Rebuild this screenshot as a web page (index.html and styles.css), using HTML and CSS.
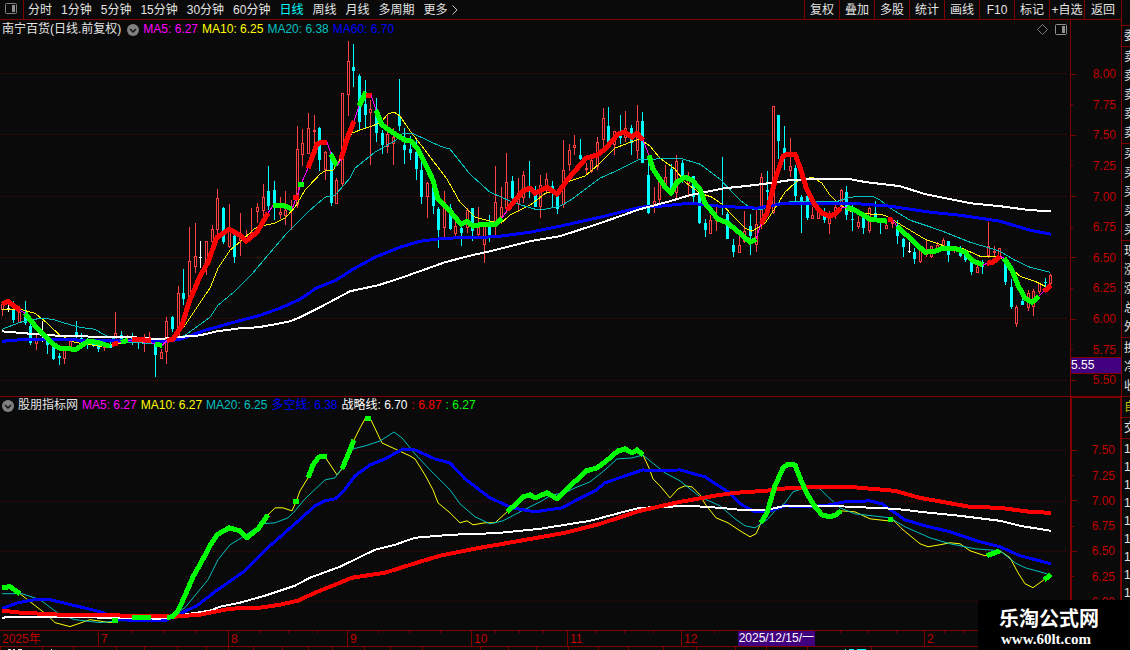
FILE: index.html
```
<!DOCTYPE html>
<html lang="zh-CN">
<head>
  <meta charset="UTF-8" />
  <title>南宁百货 日线</title>
  <link rel="stylesheet" href="styles.css">
</head>
<body>
  <div class="terminal">
    <div class="main">
      <header class="topbar">
        <button class="layout-btn" aria-label="布局">
          <svg width="12" height="11" viewBox="0 0 12 11"><rect x="0.5" y="0.5" width="11" height="10" rx="1" fill="none" stroke="#808080"/><rect x="7" y="2" width="3" height="7" fill="#909090"/></svg>
        </button>
        <nav class="periods">
          <button>分时</button>
          <button>1分钟</button>
          <button>5分钟</button>
          <button>15分钟</button>
          <button>30分钟</button>
          <button>60分钟</button>
          <button class="active">日线</button>
          <button>周线</button>
          <button>月线</button>
          <button>多周期</button>
          <button class="more">更多<svg width="6" height="10" viewBox="0 0 6 10"><path d="M0.5 0.5L5 5L0.5 9.5" fill="none" stroke="#c0c0c0"/></svg></button>
        </nav>
        <div class="tools">
          <button>复权</button>
          <button>叠加</button>
          <button>多股</button>
          <button>统计</button>
          <button>画线</button>
          <button>F10</button>
          <button>标记</button>
          <button>+自选</button>
          <button>返回</button>
        </div>
      </header>

      <section class="panel price-panel">
        <div class="plot">
          <div class="legend">
            <span class="name">南宁百货(日线.前复权)</span>
            <svg class="toggle" width="12" height="12" viewBox="0 0 12 12"><circle cx="6" cy="6" r="6" fill="#808080"/><path d="M3 5L6 8L9 5" fill="none" stroke="#111" stroke-width="1.5"/></svg>
            <span class="magenta">MA5: 6.27</span>
            <span class="yellow">MA10: 6.25</span>
            <span class="teal">MA20: 6.38</span>
            <span class="blue">MA60: 6.70</span>
            <span class="corner">
              <svg width="11" height="11" viewBox="0 0 11 11"><path d="M5.5 0.5L10.5 5.5L5.5 10.5L0.5 5.5Z" fill="none" stroke="#777"/></svg>
              <svg width="12" height="11" viewBox="0 0 12 11"><rect x="0.5" y="0.5" width="11" height="10" rx="1" fill="none" stroke="#909090"/><rect x="7" y="2" width="3" height="7" fill="#909090"/></svg>
            </span>
          </div>
          <svg class="chart" id="priceChart" viewBox="0 40 1070 356" preserveAspectRatio="none"></svg>
        </div>
        <div class="axis">
          <span>8.00</span>
          <span>7.75</span>
          <span>7.50</span>
          <span>7.25</span>
          <span>7.00</span>
          <span>6.75</span>
          <span>6.50</span>
          <span>6.25</span>
          <span>6.00</span>
          <span>5.75</span>
          <span>5.50</span>
          <b class="cursor-price">5.55</b>
        </div>
      </section>

      <section class="panel index-panel">
        <div class="plot">
          <div class="legend">
            <svg class="toggle" width="12" height="12" viewBox="0 0 12 12"><circle cx="6" cy="6" r="6" fill="#808080"/><path d="M3 5L6 8L9 5" fill="none" stroke="#111" stroke-width="1.5"/></svg>
            <span class="name">股朋指标网</span>
            <span class="magenta">MA5: 6.27</span>
            <span class="yellow">MA10: 6.27</span>
            <span class="teal">MA20: 6.25</span>
            <span class="blue">多空线: 6.38</span>
            <span class="white">战略线: 6.70</span>
            <span class="red">: 6.87</span>
            <span class="green">: 6.27</span>
          </div>
          <svg class="chart" id="indexChart" viewBox="0 415 1070 215" preserveAspectRatio="none"></svg>
        </div>
        <div class="axis">
          <span>7.50</span>
          <span>7.25</span>
          <span>7.00</span>
          <span>6.75</span>
          <span>6.50</span>
          <span>6.25</span>
          <span>6.00</span>
        </div>
      </section>

      <div class="dates" id="dates">
        <svg class="ticks" id="dateTicks" viewBox="0 0 1121 2" preserveAspectRatio="none"></svg>
      </div>
      <svg class="strip" id="strip" viewBox="0 0 1121 3" preserveAspectRatio="none"></svg>
    </div>

    <aside class="quotes">
      <div class="group head"></div>
      <div class="group"><p>委</p></div>
      <div class="group"><p>卖</p><p>卖</p><p>卖</p><p>卖</p><p>卖</p></div>
      <div class="group"><p>买</p><p>买</p><p>买</p><p>买</p><p>买</p></div>
      <div class="group"><p>现</p><p>涨</p><p>涨</p><p>总</p><p>外</p></div>
      <div class="group"><p>换</p><p>净</p><p>收</p></div>
      <div class="group yellow"><p>自</p></div>
      <div class="group"><p>交</p></div>
      <div class="group trades"><p>1</p><p>1</p><p>1</p><p>1</p><p>1</p><p>1</p><p>1</p><p>1</p><p>1</p></div>
    </aside>

    <div class="watermark">
      <strong>乐淘公式网</strong>
      <span>www.60lt.com</span>
    </div>
  </div>

  <script src="chart.js"></script>
</body>
</html>
```
FILE: styles.css
```
* {
  box-sizing: border-box;
}
body {
  margin: 0;
  background: #0a0a0a;
  color: #e4e4e4;
  font-family: "Liberation Sans", "Noto Sans CJK SC", sans-serif;
  font-size: 12px;
  line-height: 16px;
}
button {
  padding: 0;
  border: none;
  background: none;
  color: inherit;
  font: inherit;
  white-space: nowrap;
  cursor: pointer;
}
svg {
  display: block;
  flex: none;
}
.terminal {
  position: relative;
  display: flex;
  height: 100vh;
  min-height: 400px;
  overflow: hidden;
}
.main {
  flex: 1;
  min-width: 0;
  display: flex;
  flex-direction: column;
}

/* top menu */
.topbar {
  display: flex;
  height: 20px;
  border-bottom: 1px solid #800000;
}
.layout-btn {
  width: 24px;
  padding: 0 0 2px 5px;
  border-right: 1px solid #800000;
}
.periods {
  display: flex;
  flex: 1;
  gap: 9px;
  padding-left: 4px;
}
.periods .active {
  color: #00ffff;
}
.more {
  display: flex;
  align-items: center;
  gap: 4px;
}
.tools {
  display: flex;
}
.tools button {
  width: 35px;
  border-left: 1px solid #800000;
}
.tools button:last-child {
  width: 37px;
}

/* chart panels */
.panel {
  display: flex;
  min-height: 0;
}
.price-panel {
  flex: 377 1 0;
  border-bottom: 1px solid #800000;
}
.index-panel {
  flex: 233 1 0;
}
.plot {
  flex: 1;
  min-width: 0;
  display: flex;
  flex-direction: column;
}
.legend {
  display: flex;
  align-items: center;
  gap: 4px;
  height: 20px;
  padding: 0 3px 2px 2px;
  white-space: nowrap;
}
.index-panel .legend {
  height: 18px;
}
.toggle {
  margin-top: 1px;
}
.name + .toggle {
  margin-left: 2px;
}
.corner {
  display: flex;
  gap: 7px;
  margin-left: auto;
}
.magenta { color: #ff00ff; }
.yellow { color: #ffff00; }
.teal { color: #00c0c0; }
.blue { color: #0000ff; }
.white { color: #ffffff; }
.red { color: #ff0000; }
.green { color: #00ff00; }
.chart {
  flex: 1;
  width: 100%;
  min-height: 0;
  shape-rendering: crispEdges;
}
.chart polyline {
  fill: none;
  stroke-linejoin: round;
}
.grid {
  stroke: #800000;
  stroke-dasharray: 1 3;
}

/* price scale */
.axis {
  position: relative;
  width: 51px;
  display: flex;
  flex-direction: column;
  justify-content: space-between;
  padding: 46px 0 8px;
  border-left: 1px solid #800000;
  color: #c00000;
}
.index-panel .axis {
  padding: 44px 0 20px;
  border: 2px solid #800000;
  border-width: 1px 1px 0 2px;
}
.axis span {
  display: flex;
  align-items: center;
  justify-content: space-between;
  height: 16px;
  padding-right: 5px;
}
.axis span::before {
  content: "";
  width: 2px;
  height: 1px;
  background: #800000;
}
.axis span:nth-child(odd)::before {
  width: 5px;
}
.cursor-price {
  position: absolute;
  left: 0;
  right: 0;
  bottom: 6%;
  border: 1px solid #800000;
  border-width: 1px 0;
  background: #400080;
  color: #ffffff;
  font-weight: normal;
  line-height: 15px;
}

/* date scale */
.dates {
  position: relative;
  display: flex;
  height: 17px;
  border-top: 1px solid #800000;
  border-bottom: 1px solid #800000;
  color: #c00000;
}
.month {
  position: relative;
  padding-left: 2px;
  min-width: 0;
}
.month + .month {
  border-left: 1px solid #800000;
}
.cursor-date {
  position: absolute;
  top: 0;
  left: 23%;
  height: 15px;
  padding: 0 1px;
  background: #400080;
  color: #ffffff;
  line-height: 15px;
  white-space: nowrap;
}
.ticks {
  position: absolute;
  top: 0;
  left: 0;
  width: 100%;
  height: 2px;
}
.strip {
  width: 100%;
  height: 3px;
}

/* quote column, cut off by the window edge */
.quotes {
  width: 9px;
  flex: none;
  overflow: hidden;
  border-left: 1px solid #800000;
}
.group {
  padding: 1px 0 0 2px;
  border-bottom: 1px solid #800000;
}
.group.head {
  height: 26px;
}
.group p {
  width: 30px;
  margin: 0;
  line-height: 19px;
}
.group.yellow p {
  color: #c0c000;
}
.trades p {
  line-height: 18px;
}

.watermark {
  position: absolute;
  right: 0;
  bottom: 0;
  width: 152px;
  height: 50px;
  padding: 7px 0 0 21px;
  background: #000000;
  color: #ffffff;
}
.watermark strong {
  display: block;
  font-size: 20px;
  line-height: 24px;
}
.watermark span {
  display: block;
  padding-left: 2px;
  font-family: "Liberation Serif", serif;
  font-size: 15px;
  font-weight: bold;
  line-height: 16px;
}
```
FILE: chart.js
```
const NS = 'http://www.w3.org/2000/svg';
const STEP = 17 / 3;

function add(parent, tag, attrs) {
  const el = document.createElementNS(NS, tag);
  for (const key in attrs) el.setAttribute(key, attrs[key]);
  parent.appendChild(el);
}

function line(svg, color, width, points) {
  add(svg, 'polyline', { points: points, stroke: color, 'stroke-width': width });
}

function grid(svg, rows) {
  rows.forEach(y => add(svg, 'line', { class: 'grid', x1: 1, x2: 1068, y1: y + 0.5, y2: y + 0.5 }));
}

// type (u = up, d = down, w = flat), high, body top, body bottom, low
const candles = `
u 302 304 310 316,w 304 308 308 312,d 301 310 320 323,u 306 312 323 323,d 301 313 323 325,
d 323 326 343 345,u 333 338 344 350,w 321 332 332 342,d 338 340 345 354,d 344 346 359 360,
d 353 356 358 365,u 349 350 359 364,u 340 341 349 349,d 321 332 337 340,d 333 338 340 344,
d 338 341 345 349,d 340 341 345 347,d 342 345 349 352,u 343 346 348 351,d 341 345 348 348,
u 312 333 340 344,d 331 335 340 343,u 335 339 342 343,d 333 338 341 345,d 337 340 343 349,
u 334 339 343 352,u 332 337 342 343,d 340 343 355 377,u 349 352 359 359,u 317 321 352 364,
d 316 317 329 332,u 286 293 338 338,d 269 293 299 305,u 227 261 300 305,u 223 256 267 273,
w 241 257 257 268,u 241 241 264 275,u 225 229 242 247,u 189 198 230 235,d 207 208 242 244,
u 204 230 247 248,d 234 236 257 263,u 213 238 241 256,u 230 236 240 244,u 208 232 239 240,
u 203 207 212 223,u 184 197 211 217,d 166 191 206 210,d 181 190 205 220,u 197 212 215 219,
u 191 210 216 225,u 200 208 210 230,u 126 149 205 208,u 129 143 155 166,u 113 128 154 154,
u 115 130 132 147,d 127 128 160 171,u 151 152 170 180,d 152 153 203 206,u 178 180 204 204,
u 93 93 184 187,u 41 61 95 116,d 44 67 71 87,d 74 76 122 130,d 80 104 115 128,
u 100 109 113 165,d 98 116 133 142,d 130 133 145 154,u 115 134 147 153,u 128 137 144 165,
d 79 116 126 131,d 128 145 150 164,d 136 149 153 160,d 140 152 169 180,d 160 170 197 204,
u 182 183 197 218,d 183 187 206 214,d 207 209 230 248,u 191 202 228 237,d 204 208 229 230,
u 220 226 234 237,d 225 228 233 246,u 208 210 228 233,d 208 208 231 241,u 207 223 235 236,
u 222 225 245 263,d 215 223 236 242,u 166 202 225 236,u 187 207 217 224,u 153 182 208 213,
d 176 181 198 202,u 178 193 204 212,u 171 175 198 203,d 161 187 189 198,d 186 195 207 207,
u 175 185 207 218,u 173 179 189 194,d 181 186 190 207,d 192 193 209 214,u 140 170 205 208,
u 144 150 165 171,u 135 145 148 155,d 139 155 159 160,u 163 168 170 175,u 158 160 172 173,
u 137 142 167 170,u 108 118 140 148,d 107 126 143 147,u 131 131 145 155,d 115 135 138 144,
u 111 128 138 142,d 125 128 143 155,u 105 121 151 159,d 112 121 163 163,d 153 175 213 214,
u 187 201 205 213,u 178 181 200 208,u 165 177 187 190,d 164 169 190 192,u 155 161 193 198,
d 160 163 181 183,u 172 177 184 196,d 176 176 197 202,d 190 193 223 224,d 219 223 230 237,
u 215 220 234 234,u 205 215 221 231,d 157 205 208 215,d 212 214 239 239,d 239 245 252 257,
u 233 245 253 253,u 211 231 242 243,d 214 226 236 255,u 210 224 245 252,u 173 177 225 229,
d 171 190 192 210,u 106 106 213 214,d 115 115 141 159,d 126 148 158 170,u 138 166 171 177,
d 165 168 196 201,d 195 197 202 233,d 196 196 218 220,u 207 215 219 219,u 205 212 219 219,
d 208 213 220 223,u 211 215 224 234,u 205 207 216 219,u 189 190 207 210,d 186 192 215 220,
d 203 219 220 231,u 216 222 227 229,d 215 218 228 234,u 207 208 231 233,d 201 213 220 222,
d 218 220 223 234,u 223 225 229 229,u 218 220 224 228,d 220 225 236 244,d 238 239 247 257,
w 242 251 251 253,d 248 252 259 264,u 249 250 262 263,u 239 252 255 257,u 246 246 257 258,
u 242 245 252 252,u 238 240 247 249,d 241 241 255 262,u 246 248 251 253,d 246 249 256 257,
d 252 253 260 262,d 260 261 272 275,u 263 267 273 273,d 260 262 267 274,u 222 246 256 258,
u 246 251 253 257,u 248 248 257 258,d 257 258 282 285,d 279 287 307 309,u 305 307 324 327,
d 293 301 305 305,u 290 293 308 311,u 289 291 307 316,u 283 283 292 294,d 278 282 283 288,
u 274 275 284 286`.trim().split(/,\s*/);

const candleColors = { u: '#ff4040', d: '#00ffff', w: '#ffffff' };

function drawCandles(svg) {
  candles.forEach((row, i) => {
    const [type, ...v] = row.split(' ');
    const [high, top, bottom, low] = v.map(Number);
    const x = Math.floor(2.4 + i * STEP);
    const color = candleColors[type];
    add(svg, 'rect', { x: x, y: high, width: 1, height: low - high, fill: color });
    if (type === 'u') {
      add(svg, 'rect', { x: x - 0.5, y: top + 0.5, width: 2, height: Math.max(bottom - top - 1, 1), fill: '#0a0a0a', stroke: color });
    } else {
      add(svg, 'rect', { x: x - 1, y: top, width: 3, height: Math.max(bottom - top, 1), fill: color });
    }
  });
}

// price chart
const price = document.getElementById('priceChart');
grid(price, [73, 134, 196, 257, 318, 380]);
drawCandles(price);

// MA5 pieces: m = no signal, r = rising, g = falling
const ma5 = [
  ['r', '2,304 8,301 20,310'],
  ['m', '20,310 25,313'],
  ['g', '25,313 32,322 42,333 53,344 60,348 76,349 88,341 98,342 110,346'],
  ['r', '112,344 118,343'],
  ['m', '118,342 121,342'],
  ['g', '121,342 128,340'],
  ['m', '128,340 155,343'],
  ['r', '132,339 151,340'],
  ['g', '155,344 162,345'],
  ['m', '162,345 167,340'],
  ['r', '167,340 173,339 182,325 189,302 200,276 208,262 217,237 229,229 240,235 246,241 257,232 268,213'],
  ['m', '268,213 273,205'],
  ['g', '273,205 283,205 292,209'],
  ['m', '292,209 297,196 301,184 308,168'],
  ['r', '293,197 299,197'],
  ['g', '298,184 304,184'],
  ['r', '308,168 317,144 321,142 327,142'],
  ['m', '327,142 331,154'],
  ['g', '331,154 337,166'],
  ['m', '337,166 341,159'],
  ['r', '341,159 348,136 354,121'],
  ['m', '354,121 359,106'],
  ['g', '359,106 366,92'],
  ['r', '366,95 372,95'],
  ['m', '371,95 376,110'],
  ['g', '376,110 382,125 395,134 405,140 411,141 418,149 433,180 438,199 450,211 461,224 467,221 473,226 482,224 496,224 502,218'],
  ['m', '502,218 507,210'],
  ['r', '507,210 515,200 523,191 530,188 535,193 547,187 557,194 567,180 580,165 586,158 597,155 605,149 618,134 625,132 632,137 637,133 643,140'],
  ['m', '643,140 649,155'],
  ['g', '649,155 653,169 665,187 671,193 677,182 685,177 692,180 700,189 705,203 718,219 728,223 740,233 750,242 756,239'],
  ['m', '756,239 761,224'],
  ['r', '761,224 767,213 775,180 783,156 787,154 795,154 800,167 806,187 815,205 822,213 830,216 836,213 841,208'],
  ['m', '841,208 847,207'],
  ['g', '847,207 855,210 870,219 887,221'],
  ['r', '888,219 893,220'],
  ['m', '893,220 897,226'],
  ['g', '897,226 910,238 925,252 935,251 943,248 955,248 965,252 972,260 983,265'],
  ['m', '983,265 987,263'],
  ['r', '987,263 993,262 1000,256'],
  ['m', '1000,256 1004,258'],
  ['g', '1004,258 1012,270 1018,285 1025,298 1032,302 1039,296'],
  ['m', '1039,296 1044,291'],
  ['r', '1044,291 1051,285']
];

line(price, '#ffff00', 1, '2,309 20,309 35,313 45,321 60,335 75,342 100,346 130,342 170,341 185,325 205,295 210,288 218,268 230,250 242,240 255,228 265,225 275,223 285,218 295,207 305,190 320,174 326,170 333,170 338,163 345,148 352,133 360,130 380,123 388,114 394,112 400,116 411,132 425,150 447,179 460,202 475,217 495,222 502,222 510,215 530,205 547,192 555,193 567,182 585,176 600,163 615,148 628,143 640,139 650,146 660,158 675,169 685,182 700,193 712,197 722,204 735,218 745,228 752,231 765,223 775,208 785,192 797,181 812,177 822,183 830,195 838,203 850,211 860,213 885,215 900,224 925,239 945,246 962,248 980,256 1000,257 1010,267 1020,276 1035,281 1045,286');
line(price, '#00c0c0', 1, '2,329 20,322 40,318 53,319 65,323 80,327 95,329 107,336 125,342 150,343 165,342 185,335 210,317 218,305 236,290 250,276 285,235 310,210 325,197 335,195 350,178 355,168 375,152 396,140 403,133 412,133 425,139 440,146 450,149 470,174 490,192 515,203 535,209 545,209 560,206 572,199 600,178 620,169 640,159 655,159 665,158 680,158 700,164 720,179 740,200 752,209 762,209 780,202 838,201 850,197 872,196 880,200 892,209 910,220 940,230 970,242 1000,251 1015,260 1030,267 1050,272');
line(price, '#0000ff', 3, '2,341 25,339 100,340 165,341 180,339 205,330 230,323 260,315 280,308 300,299 316,288 336,280 353,269 375,257 400,247 420,241 445,238 485,237 500,236 530,232 560,226 600,217 640,207 660,206 690,203 720,206 757,208 785,203 850,203 890,206 930,212 960,215 1000,221 1030,230 1051,234');
line(price, '#ffffff', 2, '2,331 25,333 50,335 76,336 135,337 158,339 175,337 200,335 217,331 240,328 258,327 275,324 290,321 300,317 320,307 350,291 378,285 400,278 445,262 472,255 490,251 530,241 560,236 600,223 640,209 670,201 690,195 725,188 745,186 762,184 790,180 815,179 850,179 866,182 900,186 925,194 970,203 1000,206 1030,210 1051,211');
ma5.forEach(([kind, points]) => {
  const color = { m: '#ff00ff', r: '#ff0000', g: '#00ff00' }[kind];
  line(price, color, kind === 'm' ? 1 : 5, points);
});

// indicator chart
const index = document.getElementById('indexChart');
grid(index, [450, 501, 551, 601]);
line(index, '#ffff00', 1, '2,588 10,587 20,594 30,602 48,616 55,623 70,627 90,620 110,623 125,619 150,619 160,622 172,618 178,611 185,596 193,577 201,563 210,546 217,535 229,528 240,531 247,538 258,529 268,515 275,508 283,508 292,511 296,502 300,491 308,478 313,465 319,457 325,457 337,475 342,469 348,455 354,440 360,428 366,417 371,420 380,439 382,443 395,449 410,456 415,459 425,475 433,490 438,503 450,513 460,523 467,521 473,525 485,523 495,523 507,512');
line(index, '#ffff00', 1, '643,455 649,468 653,479 660,486 670,498 678,489 685,486 692,487 700,495 705,504 716,518 728,523 740,531 750,537 756,534 761,523');
line(index, '#ffff00', 1, '841,511 855,512 870,519 888,521 893,520 903,530 920,544 928,547 940,545 950,543 960,544 970,551 985,556 1000,551 1010,558 1018,573 1025,584 1033,588 1044,580');
line(index, '#00c0c0', 1, '2,594 22,594 40,600 60,615 75,620 100,623 120,621 165,621 185,608 208,580 218,560 230,545 240,539 262,524 275,523 288,518 295,511 305,499 325,480 335,478 342,468 353,449 365,446 380,441 394,432 402,438 415,454 430,470 450,490 460,504 475,517 490,524 503,521 520,512 540,502 552,495 565,493 575,488 590,482 605,470 617,459 632,458 643,455 650,461 665,473 680,481 700,497 720,506 735,519 745,526 755,528 767,520 775,511 785,503 793,492 805,488 820,489 827,496 840,508 855,514 890,518 905,527 930,538 950,544 975,549 1000,551 1015,563 1025,568 1047,574');
line(index, '#0000ff', 3, '2,609 18,603 35,600 50,600 75,606 100,612 120,620 140,621 165,621 180,614 197,606 215,592 245,571 270,546 295,524 315,506 325,501 335,499 343,492 355,476 370,465 385,459 403,449 415,450 435,459 450,463 465,479 490,498 512,508 535,512 562,508 577,500 595,491 605,483 625,476 643,470 655,471 680,470 705,477 728,492 740,504 755,512 770,511 785,506 810,507 830,505 845,502 870,501 882,504 905,520 925,526 950,532 980,542 1000,547 1020,556 1051,564');
line(index, '#ffffff', 2, '2,618 20,617 50,617 160,619 190,614 210,611 220,607 240,603 265,596 295,586 310,578 340,567 375,550 395,545 415,538 450,535 480,534 500,533 540,529 590,521 620,513 640,508 690,506 720,508 740,510 767,510 785,506 830,506 895,509 930,513 960,516 1000,521 1020,526 1051,531');
line(index, '#ff0000', 4, '2,611 20,613 60,615 130,616 175,617 200,615 230,609 260,608 280,605 298,601 315,593 340,583 352,578 385,573 420,562 440,556 480,548 520,541 565,533 600,524 640,511 680,502 720,495 735,493 765,491 790,488 820,487 850,487 895,491 920,498 970,507 1000,508 1030,512 1051,513');
[
  '2,588 10,587 20,594',
  '112,621 118,621',
  '132,618 151,618',
  '167,618 172,617 178,611 185,596 193,577 201,563 210,546 217,535 229,528 240,531 247,538 258,529 268,515',
  '293,502 299,502',
  '308,478 313,465 319,457 327,457',
  '342,469 348,455 354,440',
  '365,419 371,419',
  '507,512 515,505 523,497 530,495 535,498 547,493 557,499 567,489 580,477 586,471 597,468 605,462 618,451 625,449 632,453 637,450 643,455',
  '761,523 767,513 775,486 783,468 787,465 795,465 800,478 806,492 815,507 822,515 830,517 836,515 841,511',
  '888,520 893,520',
  '987,556 1000,551',
  '1044,580 1051,575'
].forEach(points => line(index, '#00ff00', 5, points));

// month cells, sized by their share of the time scale
const dates = document.getElementById('dates');
const months = [['2025年', 98], ['7', 130], ['8', 119], ['9', 124], ['10', 96], ['11', 114], ['12', 243], ['2', 197]];
months.forEach(([label, size]) => {
  const cell = document.createElement('div');
  cell.className = 'month';
  cell.style.width = size / 11.21 + '%';
  cell.textContent = label;
  if (label === '12') {
    const cursor = document.createElement('span');
    cursor.className = 'cursor-date';
    cursor.textContent = '2025/12/15/一';
    cell.appendChild(cursor);
  }
  dates.appendChild(cell);
});

function ticks(id, xs, height) {
  const svg = document.getElementById(id);
  xs.forEach(x => add(svg, 'rect', { x: x, y: 0, width: 1, height: height, fill: '#800000' }));
  return svg;
}
ticks('dateTicks', [131, 163, 196, 259, 288, 317, 378, 409, 440, 495, 519, 543, 596, 624, 653, 714, 840, 868, 896, 944, 964], 2);
const strip = ticks('strip', [0, 42, 73, 116, 144, 177, 206, 228, 253, 282, 308, 332, 364, 390, 422, 480, 508, 536, 568, 598, 628, 663, 696, 735, 766, 807, 871], 3);
[[8, 3], [13, 2], [18, 4], [51, 1]].forEach(([x, w]) => add(strip, 'rect', { x: x, y: 2, width: w, height: 1, fill: '#e4e4e4' }));
[[845, 1], [849, 5], [857, 9]].forEach(([x, w]) => add(strip, 'rect', { x: x, y: 2, width: w, height: 1, fill: '#00ffff' }));
```
